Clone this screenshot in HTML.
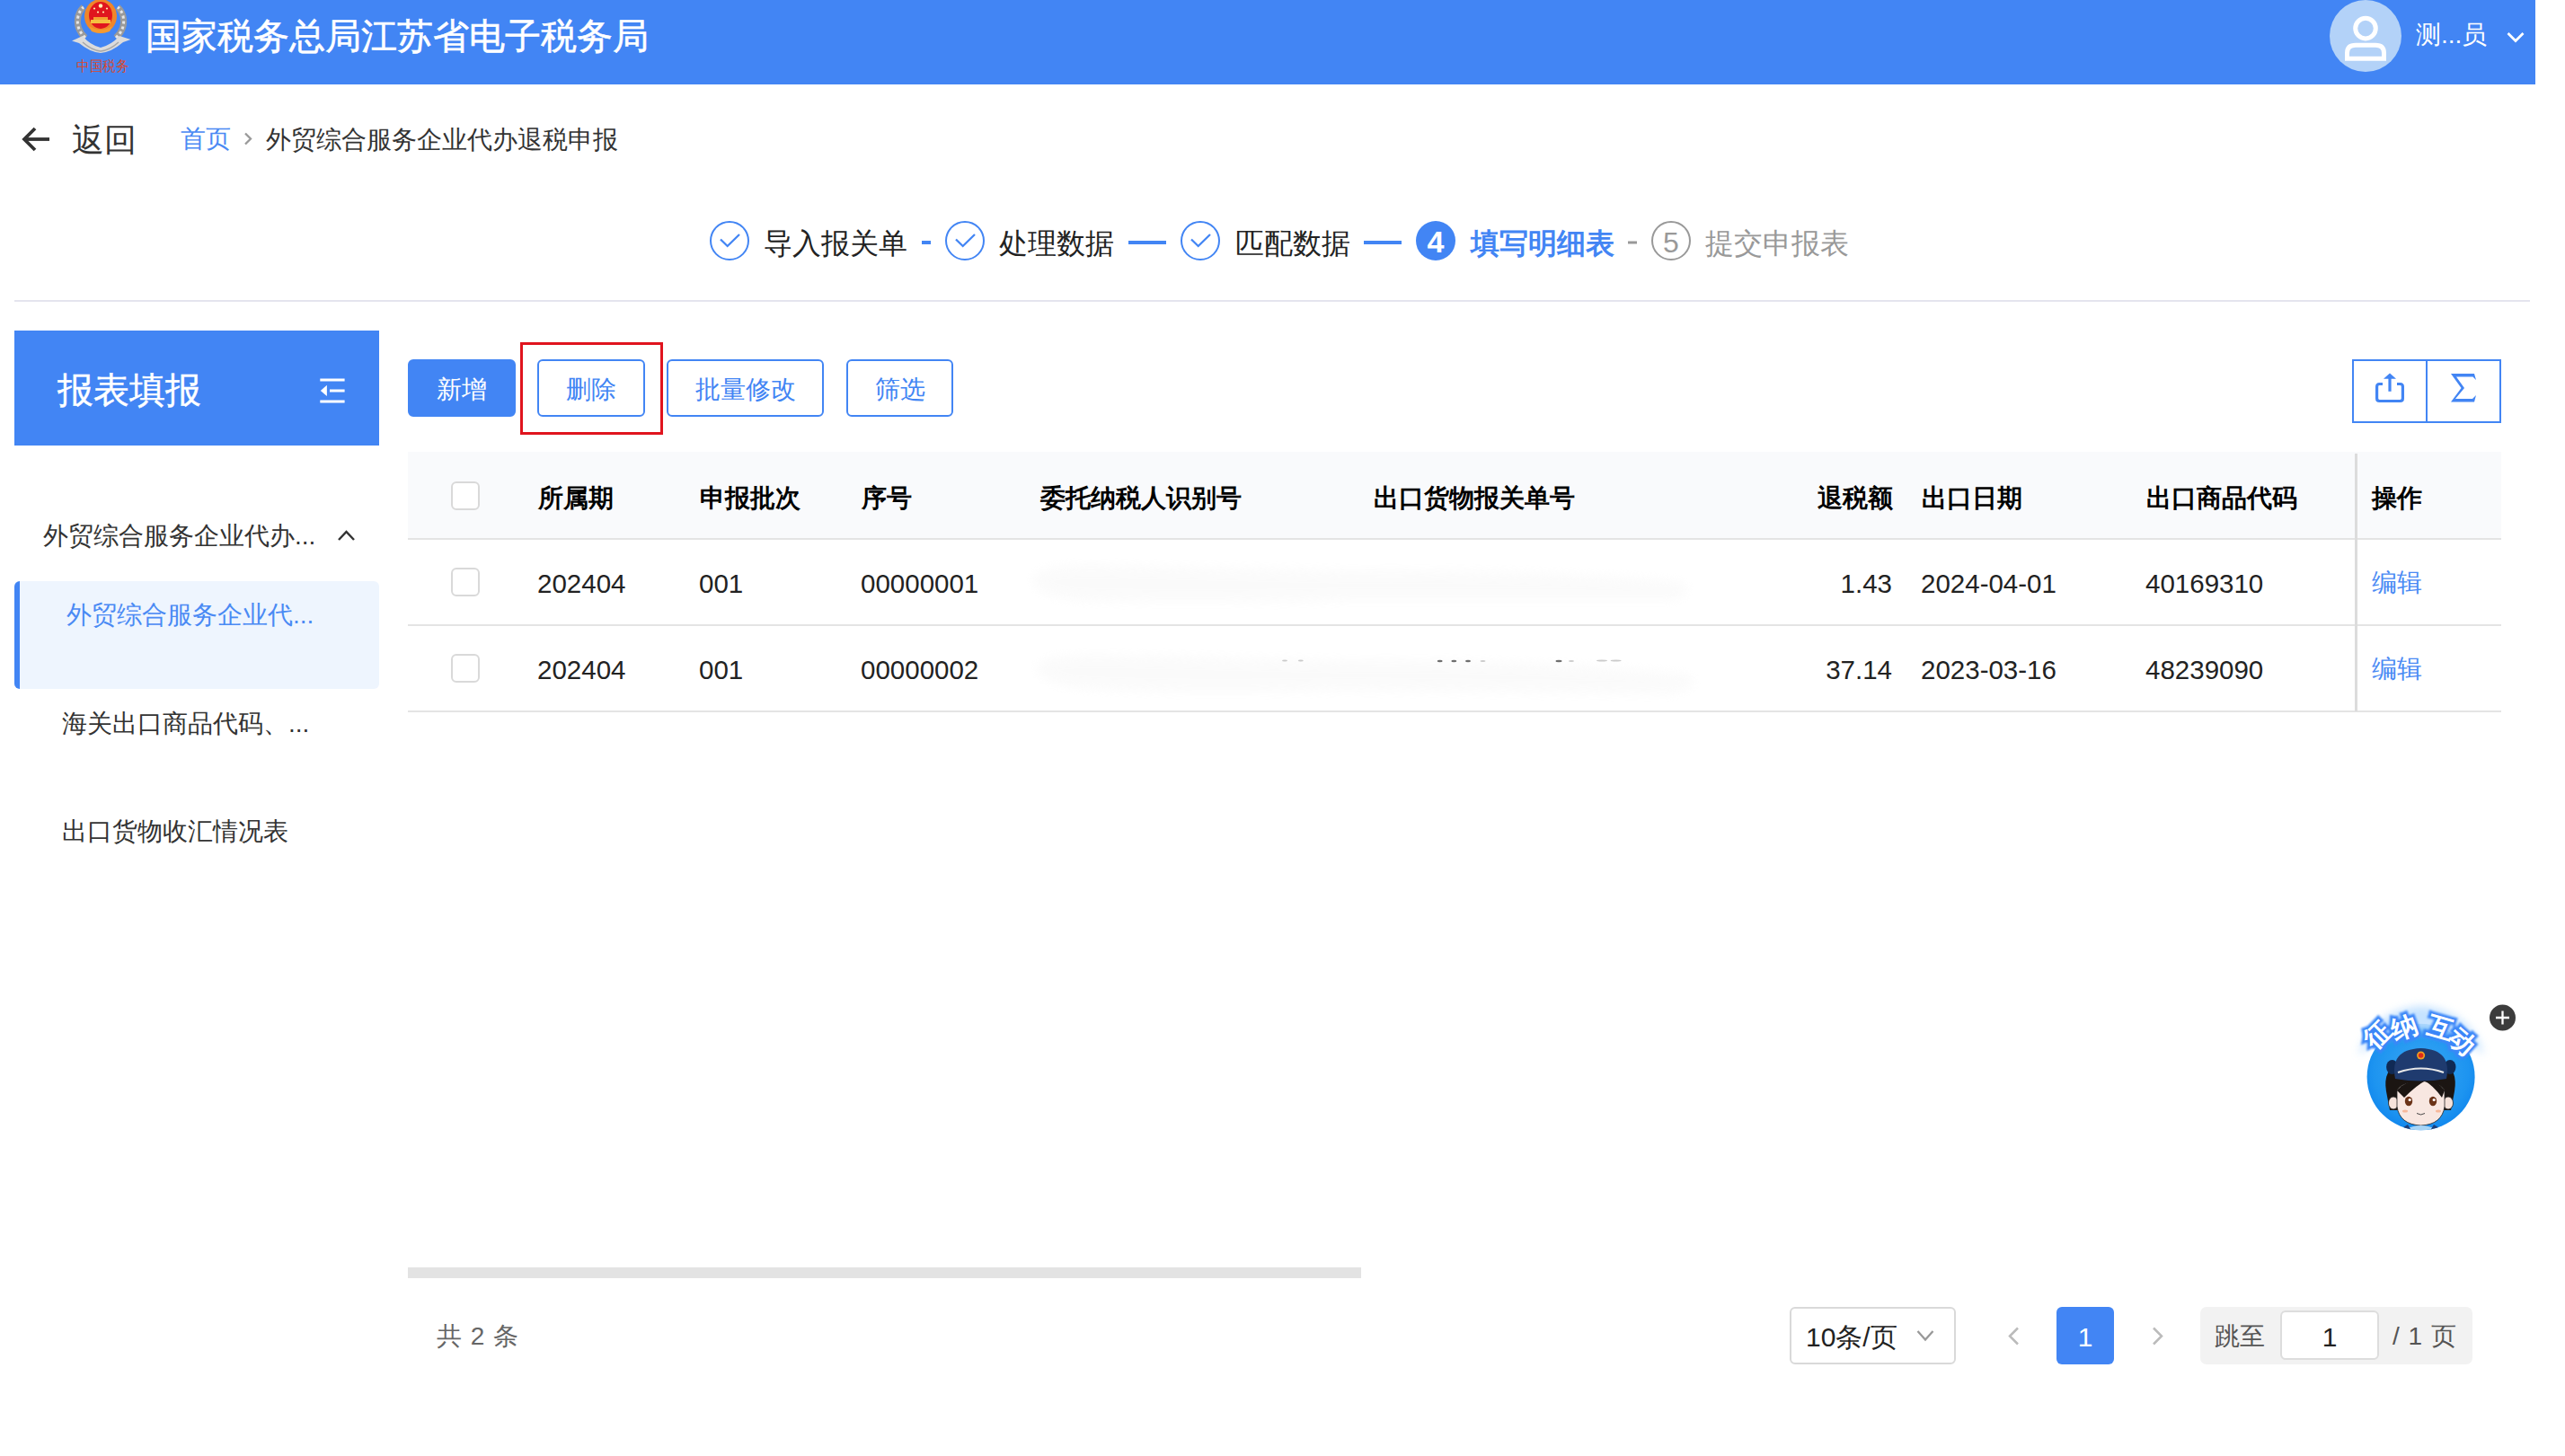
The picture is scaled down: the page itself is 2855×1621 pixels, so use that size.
<!DOCTYPE html>
<html><head><meta charset="utf-8">
<style>
*{margin:0;padding:0;box-sizing:border-box}
html,body{width:2855px;height:1621px;overflow:hidden;background:#fff;font-family:"Liberation Sans",sans-serif;color:#333}
.a{position:absolute;white-space:nowrap}
.t{line-height:1}
.btn{position:absolute;top:400px;height:64px;border-radius:6px;border:2px solid #4285f4;color:#4285f4;font-size:28px;line-height:63px;text-align:center;background:#fff}
.cb{position:absolute;left:502px;width:32px;height:32px;border:2px solid #d9d9d9;border-radius:6px;background:#fff}
.th{font-weight:bold;color:#000;font-size:28px}
.td{font-size:29.5px;color:#222}
.hl{position:absolute;left:454px;width:2330px;height:2px;background:#e4e4e4}
svg{position:absolute;left:0;top:0}
</style></head><body>
<div class="a" style="left:0;top:0;width:2822px;height:94px;background:#4285f4"></div>
<div class="a t" style="left:162px;top:21px;font-size:39.8px;color:#fff;-webkit-text-stroke:0.6px #fff">国家税务总局江苏省电子税务局</div>
<div class="a" style="left:2593px;top:0;width:80px;height:80px;border-radius:50%;background:#b3d2f8"></div>
<div class="a t" style="left:2689px;top:25px;font-size:28px;color:#fff">测...员</div>

<div class="a t" style="left:80px;top:138px;font-size:36px;color:#333">返回</div>
<div class="a t" style="left:201px;top:141px;font-size:28px;color:#4a8af4">首页</div>
<div class="a t" style="left:296px;top:142px;font-size:28px;color:#333">外贸综合服务企业代办退税申报</div>

<div class="a t" style="left:850px;top:255px;font-size:32px;color:#222">导入报关单</div>
<div class="a t" style="left:1112px;top:255px;font-size:32px;color:#222">处理数据</div>
<div class="a t" style="left:1375px;top:255px;font-size:32px;color:#222">匹配数据</div>
<div class="a t" style="left:1637px;top:255px;font-size:32px;color:#4285f4;font-weight:bold">填写明细表</div>
<div class="a t" style="left:1898px;top:255px;font-size:32px;color:#999">提交申报表</div>

<div class="a" style="left:16px;top:334px;width:2800px;height:2px;background:#e4e4ee"></div>

<div class="a" style="left:16px;top:368px;width:406px;height:128px;background:#4285f4"></div>
<div class="a t" style="left:64px;top:414px;font-size:40px;color:#fff;-webkit-text-stroke:0.5px #fff">报表填报</div>
<div class="a t" style="left:48px;top:583px;font-size:28px;color:#333">外贸综合服务企业代办...</div>
<div class="a" style="left:16px;top:647px;width:406px;height:120px;background:#eef5fe;border-radius:6px;border-left:6px solid #4285f4"></div>
<div class="a t" style="left:74px;top:671px;font-size:28px;color:#4a8af4">外贸综合服务企业代...</div>
<div class="a t" style="left:69px;top:792px;font-size:28px;color:#333">海关出口商品代码、...</div>
<div class="a t" style="left:69px;top:912px;font-size:28px;color:#333">出口货物收汇情况表</div>

<div class="btn" style="left:454px;width:120px;background:#4285f4;color:#fff">新增</div>
<div class="btn" style="left:598px;width:120px">删除</div>
<div class="btn" style="left:742px;width:175px">批量修改</div>
<div class="btn" style="left:942px;width:119px">筛选</div>
<div class="a" style="left:579px;top:381px;width:159px;height:103px;border:3px solid #e0141e"></div>

<div class="a" style="left:2618px;top:400px;width:166px;height:71px;border:2px solid #4285f4"></div>
<div class="a" style="left:2700px;top:400px;width:2px;height:71px;background:#4285f4"></div>

<div class="a" style="left:454px;top:503px;width:2330px;height:97px;background:#f9fafc"></div>
<div class="hl" style="top:599px"></div>
<div class="hl" style="top:695px"></div>
<div class="hl" style="top:791px"></div>
<div class="a" style="left:2621px;top:505px;width:3px;height:287px;background:#dcdcdc"></div>
<div class="cb" style="top:536px"></div>
<div class="cb" style="top:632px"></div>
<div class="cb" style="top:728px"></div>

<div class="a t th" style="left:599px;top:541px">所属期</div>
<div class="a t th" style="left:779px;top:541px">申报批次</div>
<div class="a t th" style="left:959px;top:541px">序号</div>
<div class="a t th" style="left:1158px;top:541px">委托纳税人识别号</div>
<div class="a t th" style="left:1529px;top:541px">出口货物报关单号</div>
<div class="a t th" style="left:2023px;top:541px">退税额</div>
<div class="a t th" style="left:2139px;top:541px">出口日期</div>
<div class="a t th" style="left:2389px;top:541px">出口商品代码</div>
<div class="a t th" style="left:2640px;top:541px">操作</div>

<div class="a t td" style="left:598px;top:635px">202404</div>
<div class="a t td" style="left:778px;top:635px">001</div>
<div class="a t td" style="left:958px;top:635px">00000001</div>
<div class="a t td" style="left:1950px;top:635px;width:156px;text-align:right">1.43</div>
<div class="a t td" style="left:2138px;top:635px">2024-04-01</div>
<div class="a t td" style="left:2388px;top:635px">40169310</div>
<div class="a t" style="left:2640px;top:635px;font-size:28px;color:#4a8af4">编辑</div>

<div class="a t td" style="left:598px;top:731px">202404</div>
<div class="a t td" style="left:778px;top:731px">001</div>
<div class="a t td" style="left:958px;top:731px">00000002</div>
<div class="a t td" style="left:1950px;top:731px;width:156px;text-align:right">37.14</div>
<div class="a t td" style="left:2138px;top:731px">2023-03-16</div>
<div class="a t td" style="left:2388px;top:731px">48239090</div>
<div class="a t" style="left:2640px;top:731px;font-size:28px;color:#4a8af4">编辑</div>

<div class="a" style="left:454px;top:1411px;width:1061px;height:12px;background:#e3e3e3"></div>
<div class="a t" style="left:486px;top:1474px;font-size:28px;color:#666;word-spacing:2px">共 2 条</div>

<div class="a" style="left:1992px;top:1455px;width:185px;height:64px;border:2px solid #d9d9d9;border-radius:6px"></div>
<div class="a t" style="left:2010px;top:1474px;font-size:30px;color:#222">10条/页</div>
<div class="a" style="left:2289px;top:1455px;width:64px;height:64px;border-radius:6px;background:#4285f4"></div>
<div class="a t" style="left:2289px;top:1474px;width:64px;text-align:center;font-size:30px;color:#fff">1</div>
<div class="a" style="left:2449px;top:1455px;width:303px;height:64px;border-radius:7px;background:#f2f2f2"></div>
<div class="a t" style="left:2465px;top:1474px;font-size:28px;color:#555">跳至</div>
<div class="a" style="left:2538px;top:1459px;width:110px;height:55px;border:2px solid #ddd;border-radius:6px;background:#fff"></div>
<div class="a t" style="left:2538px;top:1474px;width:110px;text-align:center;font-size:30px;color:#222">1</div>
<div class="a t" style="left:2663px;top:1474px;font-size:28px;color:#555;word-spacing:2px">/ 1 页</div>

<svg width="2855" height="1621" viewBox="0 0 2855 1621">
<!-- emblem -->
<g id="emblem">
 <path d="M95 42 Q84 32 87 18 Q89 11 93 8" fill="none" stroke="#9a9a9a" stroke-width="7"/>
 <path d="M129 42 Q140 32 137 18 Q135 11 131 8" fill="none" stroke="#9a9a9a" stroke-width="7"/>
 <path d="M95 42 Q84 32 87 18 Q89 11 93 8" fill="none" stroke="#e6e6e6" stroke-width="3" stroke-dasharray="3 3"/>
 <path d="M129 42 Q140 32 137 18 Q135 11 131 8" fill="none" stroke="#e6e6e6" stroke-width="3" stroke-dasharray="3 3"/>
 <path d="M80 45.5 L92 40 Q100 50 112 53 Q124 50 133 40 L145.5 44 L137 47 Q124 58 112 59 Q100 58 88 48 Z" fill="#dcdcdc"/>
 <path d="M92 47 Q102 56 112 57 Q122 56 132 47" fill="none" stroke="#a8a8a8" stroke-width="1.5"/>
 <ellipse cx="112" cy="18" rx="18" ry="19" fill="#f0862a"/>
 <ellipse cx="112" cy="17" rx="13" ry="15" fill="#e0161e"/>
 <path d="M101 22 h22 v4 h-22z" fill="#f5c040"/>
 <path d="M104 19 h16 v3 h-16z" fill="#f5a030"/>
 <path d="M99 29 Q112 37 125 29 L122 35 Q112 39 102 35z" fill="#f59a30"/>
 <circle cx="112" cy="6.5" r="2.2" fill="#fff2b0"/>
 <circle cx="105" cy="9.5" r="1.1" fill="#fff2b0"/><circle cx="119" cy="9.5" r="1.1" fill="#fff2b0"/>
 <circle cx="109" cy="13.5" r="1.1" fill="#fff2b0"/><circle cx="115" cy="13.5" r="1.1" fill="#fff2b0"/>
 <text x="85" y="79" font-size="16" fill="#d8492e" font-family="Liberation Serif, serif" textLength="58" lengthAdjust="spacingAndGlyphs">中国税务</text>
</g>
<!-- avatar person -->
<circle cx="2633" cy="31.6" r="11.3" fill="none" stroke="#fff" stroke-width="5"/>
<path d="M2612.5 65.3 V59 Q2612.5 50.3 2622 50.3 H2644 Q2653.5 50.3 2653.5 59 V65.3 Z" fill="none" stroke="#fff" stroke-width="5"/>
<path d="M2791.5 37 L2800 45.5 L2808.5 37" fill="none" stroke="#fff" stroke-width="2.8"/>
<!-- back arrow -->
<path d="M39 143 L27 155 L39 167" fill="none" stroke="#333" stroke-width="3.8" stroke-linejoin="miter"/>
<path d="M27 155 H55" fill="none" stroke="#333" stroke-width="3.8"/>
<path d="M273 148.5 L279 154.5 L273 160.5" fill="none" stroke="#999" stroke-width="2.3"/>
<!-- steps -->
<g fill="none" stroke="#4285f4" stroke-width="2">
 <circle cx="812" cy="268" r="21"/>
 <circle cx="1074" cy="268" r="21"/>
 <circle cx="1336" cy="268" r="21"/>
</g>
<g fill="none" stroke="#4285f4" stroke-width="2.3" stroke-linecap="butt">
 <path d="M802 266.5 L809.7 274 L823 261"/>
 <path d="M1064 266.5 L1071.7 274 L1085 261"/>
 <path d="M1326 266.5 L1333.7 274 L1347 261"/>
</g>
<rect x="1026" y="268" width="10" height="4" fill="#4285f4"/>
<rect x="1256" y="268" width="42" height="4" fill="#4285f4"/>
<rect x="1518" y="268" width="42" height="4" fill="#4285f4"/>
<circle cx="1598" cy="268" r="22" fill="#4285f4"/>
<text x="1598" y="281" font-size="34" font-weight="bold" fill="#fff" text-anchor="middle" font-family="Liberation Sans, sans-serif">4</text>
<rect x="1812" y="268.5" width="10" height="3" fill="#999"/>
<circle cx="1860" cy="268" r="21" fill="none" stroke="#999" stroke-width="2"/>
<text x="1860" y="281" font-size="32" fill="#999" text-anchor="middle" font-family="Liberation Sans, sans-serif">5</text>
<!-- collapse icon -->
<g fill="#fff">
 <rect x="356.3" y="421.5" width="27.3" height="3"/>
 <rect x="367" y="433.5" width="16.6" height="3"/>
 <rect x="356.3" y="445.5" width="27.3" height="3"/>
 <path d="M356.8 434.9 L363.9 428.7 V440.9 Z"/>
</g>
<path d="M377 601 L385.5 592 L394 601" fill="none" stroke="#333" stroke-width="2.5"/>
<!-- upload & sigma -->
<g fill="none" stroke="#4285f4" stroke-width="3.2">
 <path d="M2652 427.5 H2648.5 Q2645.6 427.5 2645.6 430.5 V443.5 Q2645.6 446.5 2648.5 446.5 H2671.5 Q2674.4 446.5 2674.4 443.5 V430.5 Q2674.4 427.5 2671.5 427.5 H2668"/>
 <path d="M2660 420 V435.8"/>
</g>
<path d="M2653 421.8 L2660 415.4 L2667 421.8 Z" fill="#4285f4"/>
<path d="M2728 416 H2754 L2756 423 L2752.5 419.5 H2734 L2743 432 L2733 444 H2752 L2756 440 L2754 447.5 H2728 L2739.5 432 Z" fill="#4285f4"/>
<!-- pagination chevrons -->
<path d="M2151.5 1482 L2143 1491.5 L2134.5 1482" fill="none" stroke="#999" stroke-width="2.3"/>
<path d="M2246 1478.5 L2237 1487.5 L2246 1496.5" fill="none" stroke="#bbb" stroke-width="2.5"/>
<path d="M2397 1478.5 L2406 1487.5 L2397 1496.5" fill="none" stroke="#bbb" stroke-width="2.5"/>
<!-- mascot -->
<defs>
 <radialGradient id="mg" cx="0.5" cy="0.45" r="0.55"><stop offset="0" stop-color="#3aa8f4"/><stop offset="0.8" stop-color="#1d94f0"/><stop offset="1" stop-color="#1288ee"/></radialGradient>
 <filter id="glow" x="-50%" y="-50%" width="200%" height="200%"><feGaussianBlur stdDeviation="5"/></filter>
 <filter id="glow2" x="-50%" y="-50%" width="200%" height="200%"><feGaussianBlur stdDeviation="1.2"/></filter>
 <clipPath id="mc"><ellipse cx="2694.6" cy="1199" rx="60" ry="59.2"/></clipPath>
</defs>
<ellipse cx="2694.6" cy="1199" rx="60" ry="59.2" fill="url(#mg)"/>
<path d="M2625 1175 Q2640 1125 2695 1120 Q2750 1125 2765 1175 Q2740 1150 2695 1148 Q2650 1150 2625 1175Z" fill="#bfe0ff" filter="url(#glow)" opacity="0.9"/>
<g clip-path="url(#mc)">
 <path d="M2656 1215 Q2652 1190 2670 1186 L2720 1186 Q2736 1190 2732 1215 L2728 1236 L2660 1236 Z" fill="#1b1512"/>
 <ellipse cx="2664" cy="1228" rx="5.5" ry="7" fill="#f6e2da" stroke="#222" stroke-width="0.8"/>
 <ellipse cx="2725" cy="1228" rx="5.5" ry="7" fill="#f6e2da" stroke="#222" stroke-width="0.8"/>
 <path d="M2668 1215 Q2670 1206 2694 1203 Q2719 1206 2721 1215 L2721 1232 Q2718 1252 2694.6 1253 Q2671 1252 2668 1232 Z" fill="#f8e7e1" stroke="#222" stroke-width="0.8"/>
 <path d="M2668 1214 Q2680 1200 2700 1203 Q2690 1208 2676 1222 Z" fill="#1b1512"/>
 <path d="M2721 1214 Q2712 1202 2698 1203 Q2708 1208 2718 1222 Z" fill="#1b1512"/>
 <path d="M2676 1258 Q2694.6 1248 2713 1258 Z" fill="#a8d4f5"/>
 <path d="M2664 1262 L2680 1252 L2686 1262 Z M2725 1262 L2709 1252 L2703 1262 Z" fill="#1d3f7a"/>
</g>
<ellipse cx="2662.6" cy="1188" rx="6.5" ry="8" fill="#102a55"/>
<ellipse cx="2727" cy="1188" rx="6.5" ry="8" fill="#102a55"/>
<path d="M2666 1201 C2662 1180 2670 1168 2694.6 1167 C2719 1168 2727 1180 2723 1201 Q2694.6 1206 2666 1201 Z" fill="#1f3b6f"/>
<path d="M2669 1194 Q2694.6 1185 2720 1194" fill="none" stroke="#e8e8e8" stroke-width="2.2"/>
<circle cx="2694.6" cy="1175" r="4.5" fill="#f0a020"/><circle cx="2694.6" cy="1175" r="2.8" fill="#e02a1a"/>
<ellipse cx="2681" cy="1226" rx="4.2" ry="5.2" fill="#6b3318"/>
<ellipse cx="2708" cy="1226" rx="4.2" ry="5.2" fill="#6b3318"/>
<circle cx="2682.2" cy="1224.5" r="1.6" fill="#fff"/><circle cx="2709.2" cy="1224.5" r="1.6" fill="#fff"/>
<ellipse cx="2677" cy="1237" rx="3" ry="1.5" fill="#f7b89a"/><ellipse cx="2714" cy="1237" rx="3" ry="1.5" fill="#f7b89a"/>
<path d="M2690 1239.5 Q2694.6 1242.5 2699 1239.5" fill="none" stroke="#333" stroke-width="0.9"/>
<g font-size="29" font-weight="bold" font-family="Liberation Sans, sans-serif" text-anchor="middle">
 <g fill="#3a86f8" stroke="#3a86f8" stroke-width="6" filter="url(#glow2)">
  <text transform="translate(2653 1159) rotate(-45)">征</text>
  <text transform="translate(2680 1153) rotate(-20)">纳</text>
  <text transform="translate(2714 1154) rotate(16)">互</text>
  <text transform="translate(2734 1167) rotate(42)">动</text>
 </g>
 <g fill="#fff">
  <text transform="translate(2653 1159) rotate(-45)">征</text>
  <text transform="translate(2680 1153) rotate(-20)">纳</text>
  <text transform="translate(2714 1154) rotate(16)">互</text>
  <text transform="translate(2734 1167) rotate(42)">动</text>
 </g>
</g>
<circle cx="2785.5" cy="1133" r="14.5" fill="#3c3c3c"/>
<path d="M2778 1133 H2793 M2785.5 1125.5 V1140.5" stroke="#fff" stroke-width="2.3"/>
<!-- blur smudges -->
<defs><filter id="sm" x="-10%" y="-100%" width="120%" height="300%"><feGaussianBlur stdDeviation="6"/></filter></defs>
<g filter="url(#sm)" fill="#f4f4f4" opacity="0.4">
 <path d="M1150 642 Q1160 628 1230 630 L1500 636 Q1700 634 1870 648 Q1890 660 1860 668 L1500 668 Q1300 672 1200 668 Q1145 662 1150 642Z"/>
 <path d="M1155 740 Q1165 728 1240 730 L1500 736 Q1720 734 1880 752 Q1895 765 1860 772 L1500 768 Q1300 772 1200 766 Q1150 758 1155 740Z"/>
</g>
<!-- faint digit tops peeking through blur -->
<g fill="#333" opacity="0.7">
 <ellipse cx="1602.7" cy="736" rx="3" ry="1.3"/><ellipse cx="1618.3" cy="736" rx="3" ry="1.3"/><ellipse cx="1634" cy="736" rx="3" ry="1.3"/>
 <ellipse cx="1735" cy="736" rx="3.5" ry="1.2"/>
</g>
<g fill="#999" opacity="0.5">
 <ellipse cx="1650.5" cy="736" rx="3" ry="1.1"/><ellipse cx="1749" cy="736" rx="3" ry="1.1"/>
 <ellipse cx="1783" cy="735.5" rx="6" ry="1"/><ellipse cx="1798.6" cy="735.5" rx="6" ry="1"/>
 <ellipse cx="1430" cy="735.5" rx="3" ry="1"/><ellipse cx="1447.8" cy="735.5" rx="3" ry="1"/>
</g>
</svg>
</body></html>
